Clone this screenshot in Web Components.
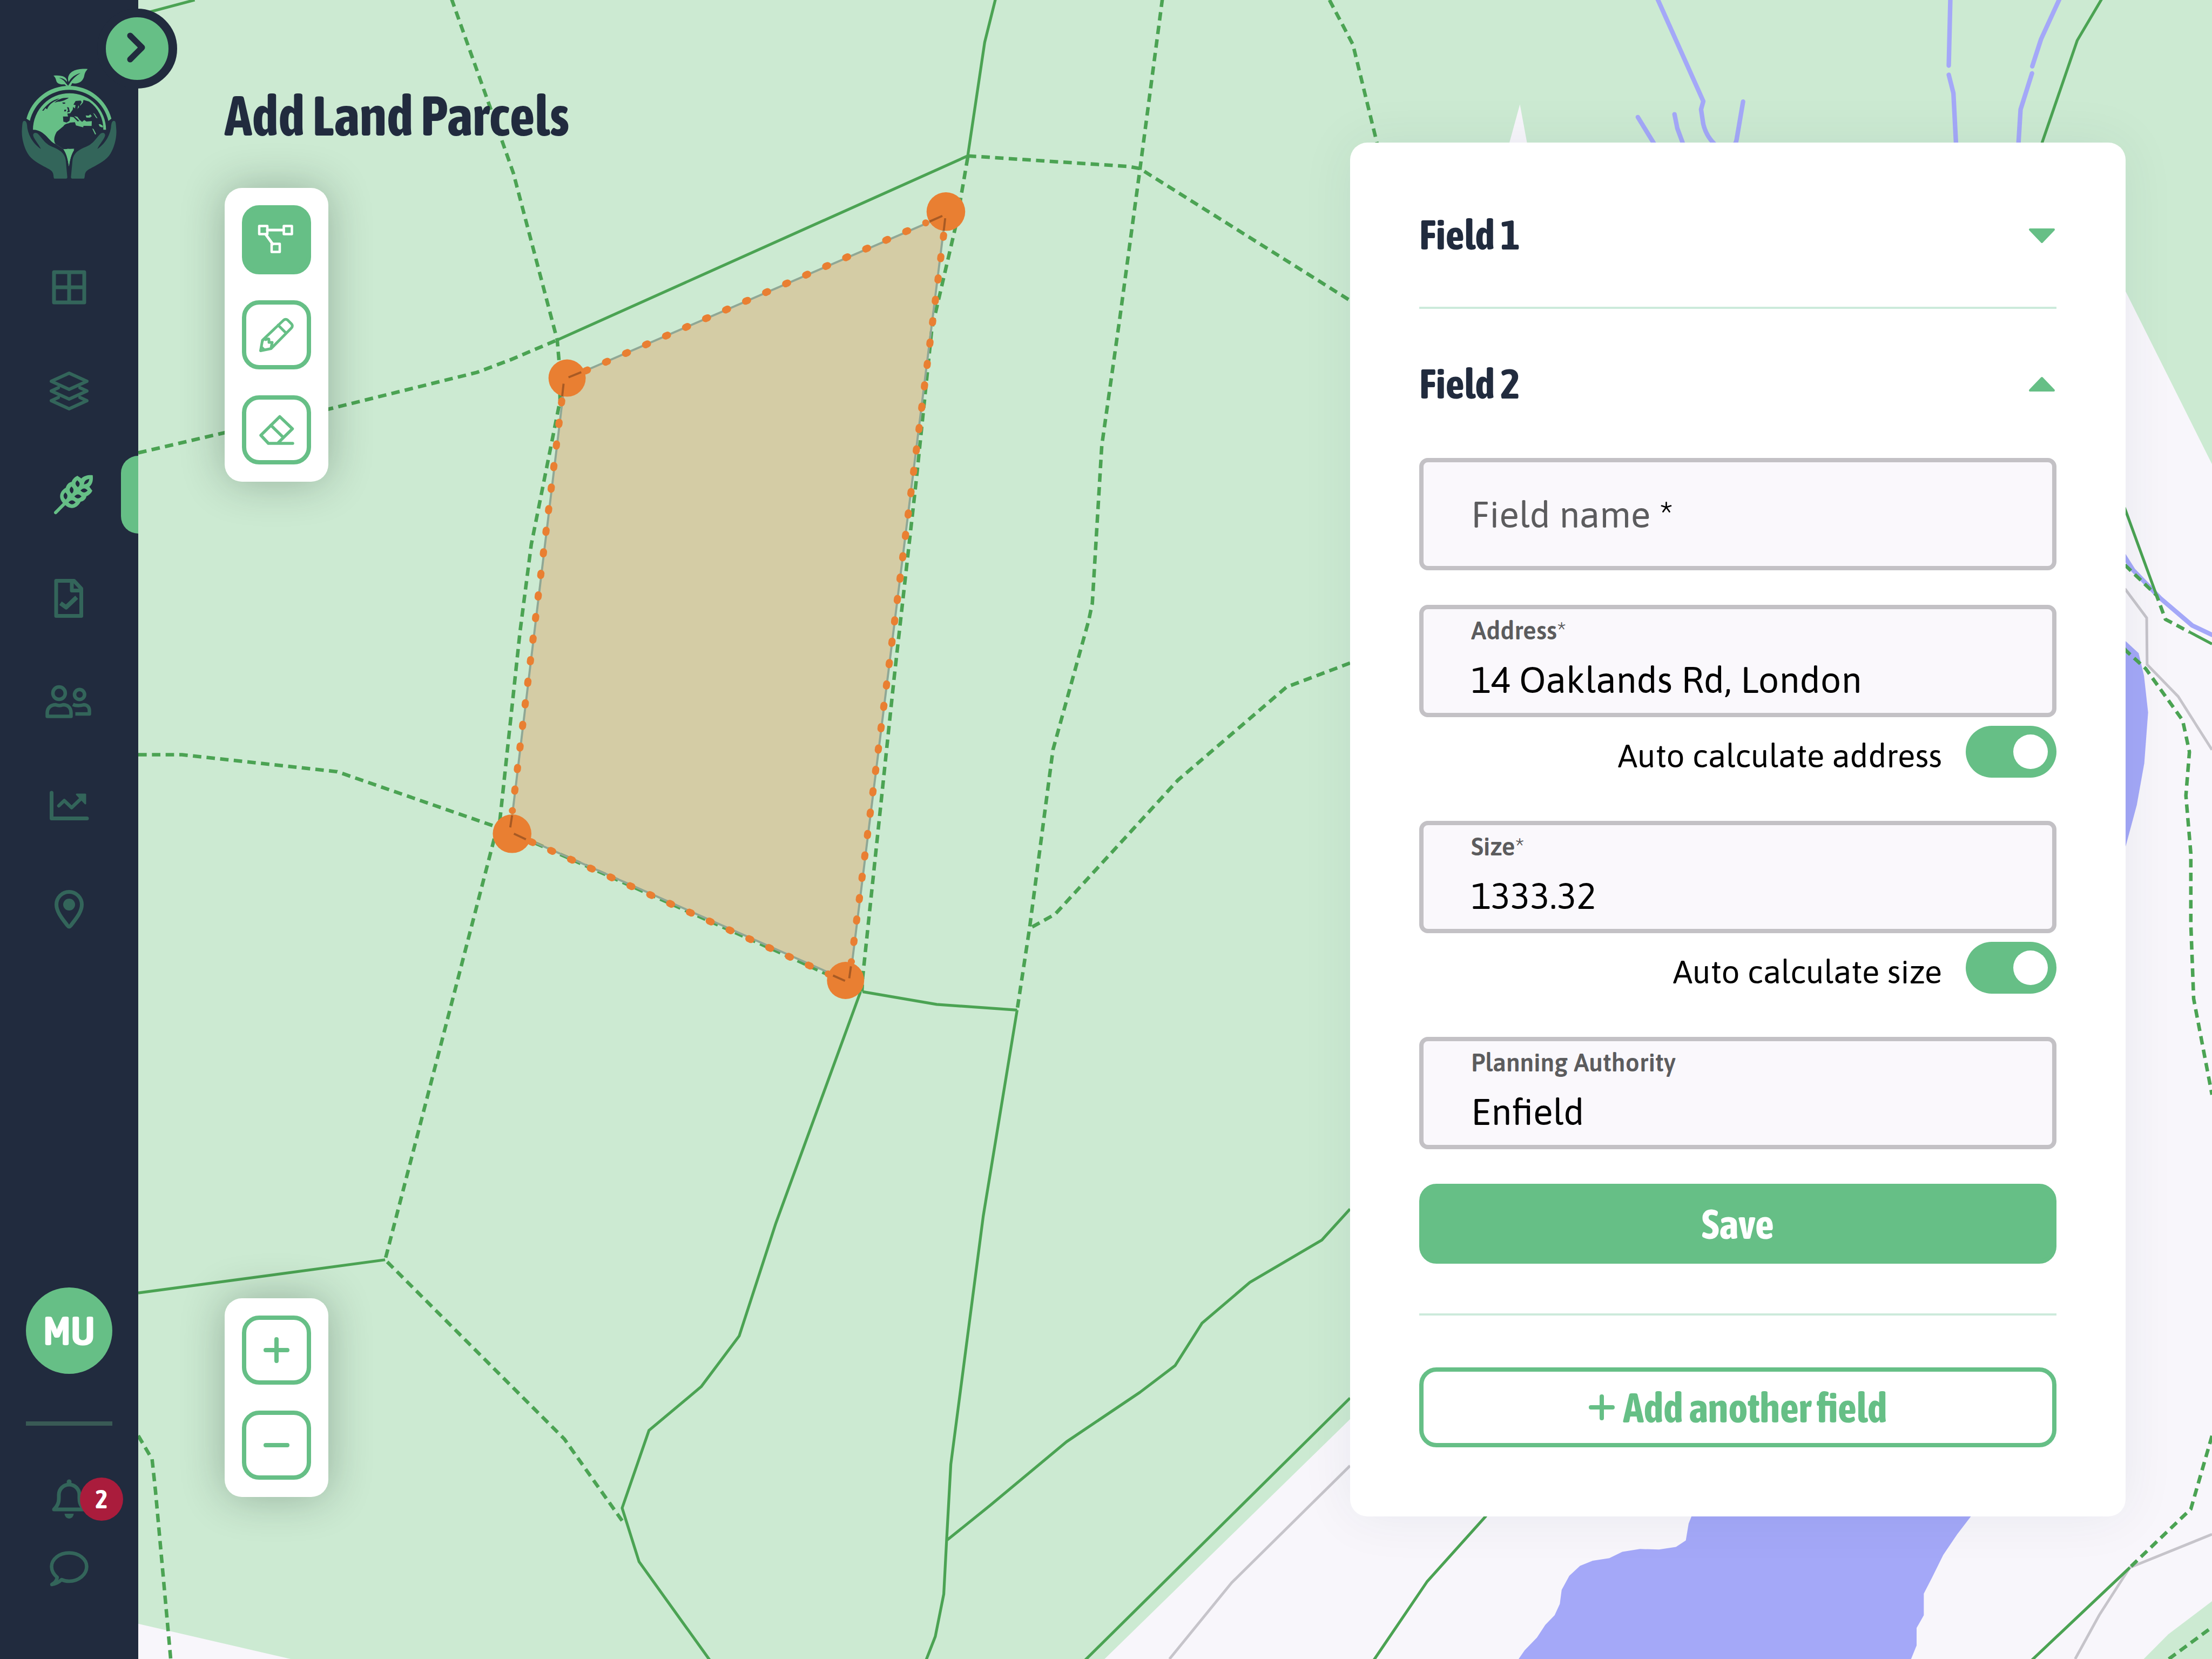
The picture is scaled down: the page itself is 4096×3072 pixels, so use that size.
<!DOCTYPE html>
<html lang="en">
<head>
<meta charset="utf-8">
<meta name="viewport" content="width=device-width, initial-scale=1">
<title>Add Land Parcels</title>
<style>
  :root {
    --green: #66bf86;
    --green-dim: #33655a;
    --navy: #212b3e;
    --text: "Asap", "Lato", sans-serif;
    --heading: "Asap Condensed", "Open Sans Condensed", "Roboto Condensed", sans-serif;
  }
  html, body { margin: 0; height: 100%; }
  body { font-family: var(--text); color: #000; background: #f8f6fb; }
</style>
</head>
<body>
<parcel-app></parcel-app>

<script>
const define = (name, html, setup) => {
  const template = document.createElement('template');
  template.innerHTML = html;
  customElements.define(name, class extends HTMLElement {
    constructor() {
      super();
      this.attachShadow({ mode: 'open' }).append(template.content.cloneNode(true));
    }
    connectedCallback() {
      if (setup && !this.ready) { this.ready = true; setup(this, this.shadowRoot); }
    }
  });
};

/* Icons share a 96-unit box centred on the origin. */
const icons = {
  chevron: '<path stroke-width="11" d="M-13-24L9-2L-13 20"/>',
  grid: '<path stroke-width="7" d="M-28-28H28V28H-28ZM0-28V28M-28 0H28"/>',
  layers: '<path stroke-width="6" d="M0-33L33-18L0-3L-33-18ZM-20-6L-33 0L0 15L33 0L20-6M-20 12L-33 18L0 33L33 18L20 12"/>',
  wheat: '<g stroke="none" transform="translate(-48 -56) scale(.3334)"><path fill="currentColor" d="M108 212C85 185 90 150 125 130C130 115 140 100 158 97C162 82 175 70 190 63L212 78C228 62 250 58 275 60C278 85 275 108 256 124L273 146C265 162 252 172 240 177C238 192 225 204 208 207C190 245 150 252 125 228Z"/><path stroke="currentColor" stroke-width="18" d="M69 267L122 214"/><path fill="#212b3e" d="M123 155Q146 175 125 195Q101 175 123 155ZM157 122Q180 142 159 162Q135 142 157 122ZM189 88Q214 108 193 127Q168 108 189 88ZM256 80Q254 108 226 111Q228 84 256 80ZM140 211Q160 188 180 211Q160 233 140 211ZM173 178Q193 155 213 178Q193 200 173 178ZM207 145Q227 122 247 145Q227 167 207 145Z"/></g>',
  doc: '<path stroke-width="7" d="M-24-32.500H9L22.500-18V32.500H-24ZM5-32V-14.500H22"/><path stroke-width="8" stroke-linecap="butt" d="M-16 9L-5.600 16.500L14-2"/>',
  people: '<g stroke-width="6.500"><circle cx="-18.600" cy="-16.500" r="11.500"/><circle cx="19.300" cy="-14" r="9.300"/><path d="M-40.500 26.500V20C-40.500 10-33 5-25 5C-20 7-16 7-11 5C-3 5 3.500 10 3.500 20V26.500Z"/><path stroke-linecap="butt" d="M7 4.500C12 7 21 7 27 5C33 5 37.500 9 37.500 16V22H11.500"/></g>',
  chart: '<path stroke-width="7" d="M-32.500-24V23.500H33"/><path stroke-width="6.500" d="M-19 0L-9-9.500L4.600 3.500L24-15"/><path fill="currentColor" stroke-width="3" d="M14-21H30V-4Z"/>',
  pin: '<path stroke-width="7" d="M3 30Q0 34-3 30C-10 20-23.500 6-23.500-9A23.500 23.500 0 0 1 23.500-9C23.500 6 10 20 3 30Z"/><circle cx="0" cy="-9" r="11" fill="currentColor" stroke="none"/>',
  bell: '<path stroke-width="7" d="M-28 19C-18 9-19 2-19-8A19 19 0 0 1 19-8C19 2 18 9 28 19Z"/><circle cx="0" cy="-32" r="4.500" fill="currentColor" stroke="none"/><path fill="currentColor" stroke="none" d="M-8.500 27H8.500A8.500 9 0 0 1-8.500 27Z"/>',
  chat: '<path stroke-width="6.500" d="M-32 30C-26 27-23 22-22 17C-29 11-32.500 4-32.500-3C-32.500-17-18-28.500 0-28.500S32.500-17 32.500-3S18 24 0 24C-5 24-10 23-14 21C-20 27-26 29-32 30Z"/>',
  nodes: '<path stroke-width="4.500" d="M-32-25.500H-17V-10.500H-32ZM13.500-25.500H28.500V-10.500H13.500ZM-9 7.500H6V22.500H-9Z"/><path stroke-width="5" d="M-17-18H13.500M-20-10L-7 8"/>',
  pencil: '<path stroke-width="5" d="M-29.500 29.500L-26 10L13-27Q17-30.500 21-27L28-20Q31-16 27-12L-10 25.500ZM3-18L18-3M-25.500 10.500Q-21 4-20 9Q-14 6-14 9V14H-8L-10 24"/><path fill="currentColor" stroke="none" d="M-30 30L-28 19L-20 27Z"/>',
  eraser: '<path stroke-width="5.500" d="M30 25H-15L-29 10L6-24.500L29.500-2L3 24M-10.600-8.700L12.400 13.800"/>',
  plus: '<path stroke-width="8" d="M-20 0H20M0-20V20"/>',
  minus: '<path stroke-width="8" d="M-20 0H20"/>',
  down: '<path fill="currentColor" stroke-width="4" d="M-22-11H22L0 12Z"/>',
  up: '<path fill="currentColor" stroke-width="4" d="M-22 11H22L0-12Z"/>'
};

define('parcel-icon', `
  <style>
    :host { display: block; width: 96px; height: 96px; }
    svg { display: block; width: 100%; height: 100%; overflow: visible; fill: none; stroke: currentColor; stroke-linecap: round; stroke-linejoin: round; }
  </style>
  <svg viewBox="-48 -48 96 96" aria-hidden="true"></svg>`,
  (host, root) => { root.querySelector('svg').innerHTML = icons[host.getAttribute('name')]; });

define('brand-logo', `
  <style>
    :host { display: block; width: 176px; height: 204px; }
    svg { display: block; width: 100%; height: 100%; }
  </style>
  <svg viewBox="30 22 528 612" role="img" aria-label="Globe held in two hands">
    <g fill="#66bf86">
      <path d="M397 24C345 20 289 32 288 80C288 88 290 92 292 96C305 72 325 56 357 47C330 64 312 82 300 100L288 118H303L311 103C350 112 374 88 378 62C380 46 388 34 397 24Z"/>
      <path d="M207 61C250 57 285 66 282 96C272 82 255 74 238 73C258 82 270 92 276 104L289 118H278L268 109C245 112 226 106 222 88C220 76 214 68 207 61Z"/>
      <path d="M57 300A244 244 0 0 1 529 300L512 313A224 224 0 0 0 76 312Z"/>
      <path d="M93 362A203 203 0 0 1 499 362H483C470 362 400 420 318 470H322C305 500 298 530 293 566C288 530 280 495 262 470L219 441C180 428 160 362 93 362Z"/>
    </g>
    <g fill="#212b3e">
      <path d="M219 441C202 420 217 385 226 372L262 342C272 326 285 330 300 322L326 320L332 338L372 348L374 340L419 341L420 314L390 316L378 308L366 318L352 306L340 290L322 286L350 312L342 316L318 292L300 290L296 312L280 322L262 317L260 288H288L284 272L300 270L314 250L316 235L326 243L330 225L318 222L330 202L358 200L364 208L356 222L352 240L346 226L340 246L370 212L374 196L405 205A188 188 0 0 1 484 362L500 400L330 467L262 470Z"/>
      <path d="M282 236L292 238L298 262L282 266L288 254ZM268 250L278 250L276 260L266 260ZM256 210L272 210L272 217L260 218Z"/>
      <path d="M144 256C170 222 200 196 240 188L222 200C200 210 180 225 172 248L162 242L152 256Z"/>
      <path d="M212 212C232 192 258 182 292 184C278 196 250 206 232 206Z"/>
    </g>
    <g fill="#66bf86">
      <path d="M386 282L402 284L412 276L420 286L410 294H390ZM427 268L436 274L452 298L444 296ZM422 354L430 358L444 386L438 388ZM458 332L466 330L482 340L480 350L464 344Z"/>
      <path d="M262 470Q276 474 282 468Q298 466 306 474L322 474C305 500 298 530 293 566C288 530 280 495 262 470Z"/>
    </g>
    <g fill="#33655a">
      <path id="hand" d="M40 314Q56 306 60 335C62 385 92 440 137 468C128 445 96 412 94 392C95 376 112 376 122 386C150 415 160 440 200 456C240 472 270 490 275 530L284 626Q284 633 278 633H212Q208 632 207 615C204 590 190 585 165 571C130 552 84 528 65 495C45 465 28 405 32 360C34 335 34 320 40 314Z"/>
      <use href="#hand" transform="translate(588 0) scale(-1 1)"/>
    </g>
  </svg>`);

define('nav-item', `
  <style>
    :host { display: block; }
    a { display: grid; place-items: center; position: relative; height: 192px; color: var(--green-dim); text-decoration: none; }
    :host([compact]) a { height: 128px; }
    :host([active]) a { color: var(--green); }
    :host([active]) a::after { content: ""; position: absolute; right: 0; top: 24px; width: 32px; height: 144px; border-radius: 32px 0 0 32px; background: var(--green); }
    ::slotted(*) { position: absolute; left: 148px; top: 24px; }
  </style>
  <a href="#"><parcel-icon></parcel-icon><slot></slot></a>`,
  (host, root) => {
    root.querySelector('a').setAttribute('aria-label', host.getAttribute('label'));
    const icon = document.createElement('parcel-icon');
    icon.setAttribute('name', host.getAttribute('icon'));
    root.querySelector('parcel-icon').replaceWith(icon);
  });

define('count-badge', `
  <style>
    :host { display: grid; place-items: center; width: 80px; height: 80px; border-radius: 50%; background: #aa1c3c; color: #fff; font: 700 48px/76px var(--heading); }
  </style>
  <slot></slot>`);

define('side-bar', `
  <style>
    :host { display: flex; flex-direction: column; position: relative; z-index: 2; flex: none; width: 256px; box-sizing: border-box; padding: 127px 0 104px; background: var(--navy); }
    brand-logo { align-self: center; flex: none; margin-bottom: 105px; }
    .expand { position: absolute; left: 180px; top: 16px; display: grid; place-items: center; width: 148px; height: 148px; padding: 0; border: 16px solid var(--navy); border-radius: 50%; background: var(--green); color: var(--navy); }
    .foot { margin-top: auto; }
    .avatar { display: grid; place-items: center; width: 160px; height: 160px; margin: 0 auto 88px; border-radius: 50%; background: var(--green); color: #fff; font: 700 76px/88px var(--heading); }
    hr { width: 160px; height: 8px; margin: 0 auto 72px; border: 0; background: #395a55; }
  </style>
  <brand-logo></brand-logo>
  <button class="expand" aria-label="Expand menu"><parcel-icon name="chevron"></parcel-icon></button>
  <nav>
    <nav-item icon="grid" label="Dashboard"></nav-item>
    <nav-item icon="layers" label="Layers"></nav-item>
    <nav-item icon="wheat" label="Land" active></nav-item>
    <nav-item icon="doc" label="Documents"></nav-item>
    <nav-item icon="people" label="People"></nav-item>
    <nav-item icon="chart" label="Reports"></nav-item>
    <nav-item icon="pin" label="Places"></nav-item>
  </nav>
  <div class="foot">
    <div class="avatar">MU</div>
    <hr>
    <nav-item icon="bell" label="Notifications" compact><count-badge>2</count-badge></nav-item>
    <nav-item icon="chat" label="Messages" compact></nav-item>
  </div>`);

define('parcel-map', `
  <style>
    :host { display: block; }
    svg { display: block; width: 100%; height: 100%; }
    .land { fill: #ccead2; }
    .water { fill: #a4a8f8; }
    .line { fill: none; stroke: #4ba353; stroke-width: 2; stroke-linejoin: round; }
    .dash { stroke-dasharray: 6 3.700; stroke-width: 2.500; }
    .stream { fill: none; stroke: #a4a8f8; stroke-width: 3.200; stroke-linecap: round; stroke-linejoin: round; }
    .road { fill: none; stroke: #c6c4ca; stroke-width: 1.900; }
    .area { fill: #e97f32; fill-opacity: .28; stroke: #8fa795; stroke-width: 1.500; }
    .dots { fill: none; stroke: #e97f32; stroke-width: 5; stroke-linecap: round; stroke-dasharray: .1 .9; }
    .node { fill: #e97f32; }
    .tick { fill: none; stroke: #a85a24; stroke-width: 1.500; }
  </style>
  <svg viewBox="0 0 1568 1176" preserveAspectRatio="xMinYMin slice" role="img" aria-label="Map of land parcels">
    <path class="land" d="M0 0H1568V329L1506.800 206.600L1300 180L1090 150L1082.400 101L1077.400 74L1070 101L1060 150L1020 950L957 1006L783 1176H206L98 1151L0 1130Z"/>
    <path class="land" d="M1519.600 1176L1537 1158.500L1568 1135V1176Z"/>
    <path class="water" d="M1199 1060V1075L1197 1080L1195 1092L1188 1096.600L1176 1098.400L1162.500 1098L1150 1100L1140.800 1104.500L1129 1106.300L1120 1110L1112.400 1117L1107 1127L1105.700 1137L1102 1145L1095.400 1151.800L1089.500 1160.800L1080.800 1169.800L1076.500 1176H1354.700L1358.600 1166.400V1154L1363.700 1145V1129.700L1369.700 1118L1377.500 1102.200L1387.400 1087.600L1397 1075L1402 1060Z"/>
    <path class="water" d="M1500 452L1506.800 454.500L1516 463L1519.800 479L1522.700 505L1520 541L1514.700 570.600L1506.800 600L1500 620Z"/>
    <g class="road">
      <path d="M957 1039L873 1122L829 1176M1568 1087.600L1509.700 1111.200L1488 1145L1471 1176M1500 412L1506.800 418L1521.700 438L1522 471L1544 493.700L1568 531.500"/>
    </g>
    <g class="stream">
      <path d="M1173.500 -4L1207.400 71.800L1205.800 77.600L1207.400 88Q1210 99 1220 106Q1230 106 1231 99L1235.600 72M1187 81L1189 91L1193.800 104M1161 83L1172 101L1176 108M1382.600 -4L1381.400 46.500M1381.400 53L1384.700 66L1386.700 105M1461.400 -4L1446.800 27.800L1440.600 47M1440.400 52L1432.300 77.600L1430.600 105M1500 385L1512 404L1531.300 424L1554 443.400L1568 450"/>
    </g>
    <g class="line">
      <path d="M98 10.600L138 0M395 241L686 110.500L698 30L706 -2M721 716L697 862L674 1038L671 1092L669 1130L663 1160L656 1178M611.500 703L664 712L721 716M610 703L550 867L524 947L497 983L460 1014L441 1069L453 1107L504 1178M98 916.500L273 893M957 857L937 879L886 909L852 938L833 968L808 987L756 1022L702 1067L671 1092M957 991L769 1177M1060 1062L1053 1075L1011.500 1121.300L973 1178M1509.700 1111.200L1439 1178M1500 345L1506.800 362L1528.700 422M1552 448L1568 456.500M1490 -1L1472.500 28.600L1447.600 101L1446 108"/>
    </g>
    <g class="line dash">
      <path d="M320 -1L354.400 95.700L363.900 122.700L395 241L396.600 259.600L397 284L376.600 386L368.600 448L354.400 581L351 592L273 893L400 1020L441 1078"/>
      <path d="M98 321L158 307L233 290L338 264L362 255L395 241"/>
      <path d="M686 111.500L678 158L660.600 232.600L649.500 340.500L633.700 481.600L611.500 693L611 703"/>
      <path d="M686 110.500L800 118L808 119.500L957 213"/>
      <path d="M824 -1L808.200 119L794 224L781 316L774.300 427.700L771.700 440L746.400 531.500L729.800 658L721 716"/>
      <path d="M957 470L912 487L835 553L748 648L730 658"/>
      <path d="M98 535L129 535L239 547L354.400 587L378 597L559 678L611 702"/>
      <path d="M98 1017.700L107.800 1034.300L110.200 1056.700L121 1176"/>
      <path d="M942.400 0L959 31.500L976 101V108"/>
      <path d="M1500 393L1506.800 401L1528.700 422L1535 439L1552 448"/>
      <path d="M1500 452L1506.800 461L1521 474L1547.200 510.600L1552 533L1549.500 564L1553 605V655L1555 708L1568 776"/>
      <path d="M1568 1017.800L1553 1069.700L1509.700 1111.200M1537.400 1176L1568 1153.500"/>
    </g>
    <path class="area" d="M400.500 269L670.200 152.500L602.300 696L361.700 589.500Z"/>
    <g class="node">
      <circle cx="402" cy="268" r="13.200"/><circle cx="670.500" cy="150" r="13.700"/><circle cx="363" cy="591" r="13.700"/><circle cx="599.400" cy="695" r="13.200"/>
    </g>
    <path class="tick" d="M403 267.500L412 263.800M399.500 272L398.500 281M659 157L668 153M670 154.700L669 163.500M361.700 586.500L363 578M364.300 591L372.800 595M590.500 691.500L599 695.300M602 693.500L603.200 685"/>
    <g class="dots">
      <path pathLength="17" d="M415 262.900L656.200 158"/>
      <path pathLength="19" d="M398.200 284.100L363.200 574.600"/>
      <path pathLength="34" d="M668.900 166.700L603.500 681.700"/>
      <path pathLength="15" d="M376.300 596.600L587 690.400"/>
    </g>
  </svg>`);

define('tool-card', `
  <style>
    :host { display: flex; flex-direction: column; gap: 48px; box-sizing: border-box; width: 192px; padding: 32px; border-radius: 32px; background: #fff; box-shadow: 0 0 80px rgba(20, 40, 30, .3); }
  </style>
  <slot></slot>`);

define('tool-button', `
  <style>
    :host { display: block; }
    button { display: grid; place-items: center; box-sizing: border-box; width: 128px; height: 128px; padding: 0; border: 8px solid var(--green); border-radius: 32px; background: #fff; color: var(--green); }
    :host([active]) button { background: var(--green); color: #fff; }
  </style>
  <button></button>`,
  (host, root) => {
    const button = root.querySelector('button');
    button.setAttribute('aria-label', host.getAttribute('label'));
    button.innerHTML = `<parcel-icon name="${host.getAttribute('icon')}"></parcel-icon>`;
  });

define('fold-header', `
  <style>
    :host { display: block; }
    h2 { margin: 0; }
    button { display: flex; align-items: center; justify-content: space-between; width: 100%; height: 88px; padding: 0; border: 0; background: none; color: var(--navy); text-align: left; font: 700 77px/88px var(--heading); }
    parcel-icon { width: 96px; margin-right: -21px; color: var(--green); }
    span { padding-bottom: 4px; }
  </style>
  <h2><button><span><slot></slot></span><parcel-icon></parcel-icon></button></h2>`,
  (host, root) => {
    const open = host.hasAttribute('open');
    root.querySelector('button').setAttribute('aria-expanded', open);
    const icon = document.createElement('parcel-icon');
    icon.setAttribute('name', open ? 'up' : 'down');
    root.querySelector('parcel-icon').replaceWith(icon);
  });

define('text-field', `
  <style>
    :host { display: block; }
    .box { display: grid; align-content: center; box-sizing: border-box; height: 208px; padding: 0 88px 6px; border: 8px solid #c3c1c5; border-radius: 16px; background: #faf8fc; }
    label { color: #5c5c5e; font: 600 46px/56px var(--text); }
    input { display: block; box-sizing: border-box; width: 100%; height: 88px; margin: 18px 0 0; padding: 0; border: 0; outline: 0; background: none; color: #000; font: 400 68px/88px var(--text); }
    i { font-style: normal; font-weight: 400; }
    :host([empty]) .box { padding-bottom: 0; }
    :host([empty]) label, :host([empty]) input { grid-area: 1 / 1; margin: 0; font: 400 68px/88px var(--text); }
    :host([empty]) i { color: #000; }
  </style>
  <div class="box"><label for="input"></label><input id="input" type="text"></div>`,
  (host, root) => {
    const value = host.getAttribute('value') || '';
    if (!value) host.setAttribute('empty', '');
    const star = host.hasAttribute('required') ? (value ? '<i>*</i>' : ' <i>*</i>') : '';
    root.querySelector('label').innerHTML = host.getAttribute('label') + star;
    root.querySelector('input').value = value;
  });

define('toggle-switch', `
  <style>
    :host { display: block; }
    label { display: flex; align-items: flex-start; justify-content: flex-end; gap: 44px; height: 96px; color: #000; font: 400 60px/112px var(--text); }
    input { appearance: none; display: flex; align-items: center; justify-content: flex-end; box-sizing: border-box; width: 168px; height: 96px; margin: 0; padding: 0 16px; border-radius: 48px; background: var(--green); }
    input::before { content: ""; width: 64px; height: 64px; border-radius: 50%; background: #fff; }
    input:not(:checked) { justify-content: flex-start; background: #c3c1c5; }
  </style>
  <label><slot></slot><input type="checkbox" role="switch" checked></label>`);

define('action-button', `
  <style>
    :host { display: block; }
    button { display: flex; align-items: center; justify-content: center; gap: 16px; box-sizing: border-box; width: 100%; height: 148px; padding: 0; border: 8px solid var(--green); border-radius: 32px; background: var(--green); color: #fff; font: 700 77px/88px var(--heading); }
    :host([outline]) button { background: #fff; color: var(--green); }
    ::slotted(parcel-icon) { margin: 0 -24px; }
  </style>
  <button><slot name="icon"></slot><slot></slot></button>`);

define('field-panel', `
  <style>
    :host { display: block; box-sizing: border-box; padding: 128px; border-radius: 32px; background: #fff; box-shadow: 0 0 100px rgba(20, 60, 70, .07); }
    hr { height: 4px; margin: 0; border: 0; background: #cceadb; }
    form { display: flex; flex-direction: column; gap: 64px; margin: 92px 0; }
    .auto { display: flex; flex-direction: column; gap: 16px; margin-bottom: 16px; }
    .first { margin-bottom: 88px; }
    .second { margin-top: 96px; }
    .add { margin-top: 96px; }
  </style>
  <fold-header class="first">Field 1</fold-header>
  <hr>
  <fold-header class="second" open>Field 2</fold-header>
  <form>
    <text-field label="Field name" required></text-field>
    <div class="auto">
      <text-field label="Address" value="14 Oaklands Rd, London" required></text-field>
      <toggle-switch>Auto calculate address</toggle-switch>
    </div>
    <div class="auto">
      <text-field label="Size" value="1333.32" required></text-field>
      <toggle-switch>Auto calculate size</toggle-switch>
    </div>
    <text-field label="Planning Authority" value="Enfield"></text-field>
    <action-button>Save</action-button>
  </form>
  <hr>
  <action-button class="add" outline><parcel-icon slot="icon" name="plus"></parcel-icon>Add another field</action-button>`);

define('parcel-app', `
  <style>
    :host { display: flex; position: relative; min-height: 100vh; overflow: hidden; }
    parcel-map { position: absolute; inset: 0; z-index: 0; }
    main { position: relative; z-index: 1; flex: 1; display: flex; justify-content: space-between; align-items: stretch; padding: 0 160px; }
    .tools { display: flex; flex-direction: column; align-items: flex-start; padding: 158px 0 300px; }
    h1 { margin: 0 0 78px; color: var(--navy); font: 700 103px/112px var(--heading); }
    .zoom { margin-top: auto; }
    field-panel { align-self: flex-start; width: 1436px; margin-top: 264px; }
  </style>
  <parcel-map></parcel-map>
  <side-bar></side-bar>
  <main>
    <div class="tools">
      <h1>Add Land Parcels</h1>
      <tool-card>
        <tool-button icon="nodes" label="Draw parcel" active></tool-button>
        <tool-button icon="pencil" label="Edit"></tool-button>
        <tool-button icon="eraser" label="Erase"></tool-button>
      </tool-card>
      <tool-card class="zoom">
        <tool-button icon="plus" label="Zoom in"></tool-button>
        <tool-button icon="minus" label="Zoom out"></tool-button>
      </tool-card>
    </div>
    <field-panel></field-panel>
  </main>`);
</script>
</body>
</html>
